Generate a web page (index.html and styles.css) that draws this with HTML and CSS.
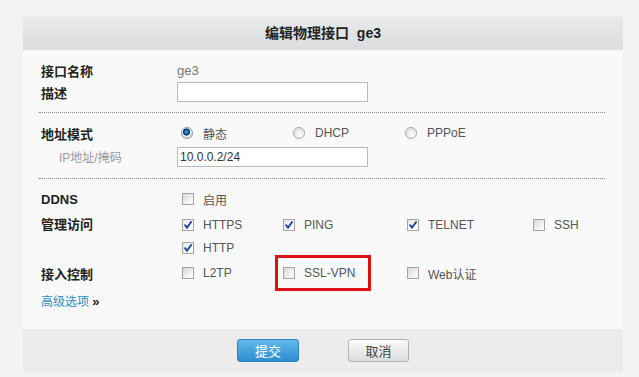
FILE: index.html
```html
<!DOCTYPE html>
<html lang="zh-CN">
<head>
  <meta charset="UTF-8">
  <title>编辑物理接口 ge3</title>
  <link rel="stylesheet" href="styles.css">
</head>
<body>

  <!-- Dialog -->
  <div class="panel">
    <div class="panel-head">编辑物理接口&nbsp; ge3</div>

    <div class="panel-body">
      <!-- Name / description -->
      <div class="group">
        <div class="row">
          <span class="label">接口名称</span>
          <span class="value">ge3</span>
        </div>
        <div class="row">
          <span class="label">描述</span>
          <input class="field" type="text">
        </div>
      </div>

      <!-- Address -->
      <div class="group">
        <div class="row">
          <span class="label">地址模式</span>
          <div class="opts radios">
            <label class="opt"><span class="rd on"></span>静态</label>
            <label class="opt"><span class="rd"></span>DHCP</label>
            <label class="opt"><span class="rd"></span>PPPoE</label>
          </div>
        </div>
        <div class="row row-ip">
          <span class="label sub">IP地址/掩码</span>
          <input class="field" type="text" value="10.0.0.2/24">
        </div>
      </div>

      <!-- Services -->
      <div class="group last">
        <div class="row">
          <span class="label">DDNS</span>
          <div class="opts checks">
            <label class="opt"><span class="cb"></span>启用</label>
          </div>
        </div>
        <div class="row row-multi">
          <span class="label">管理访问</span>
          <div class="opts checks">
            <label class="opt"><span class="cb on"><svg viewBox="0 0 10 10"><path d="M1.6 4.6 L4 7.6 L8.6 1.4"/></svg></span>HTTPS</label>
            <label class="opt"><span class="cb on"><svg viewBox="0 0 10 10"><path d="M1.6 4.6 L4 7.6 L8.6 1.4"/></svg></span>PING</label>
            <label class="opt"><span class="cb on"><svg viewBox="0 0 10 10"><path d="M1.6 4.6 L4 7.6 L8.6 1.4"/></svg></span>TELNET</label>
            <label class="opt"><span class="cb"></span>SSH</label>
            <label class="opt"><span class="cb on"><svg viewBox="0 0 10 10"><path d="M1.6 4.6 L4 7.6 L8.6 1.4"/></svg></span>HTTP</label>
          </div>
        </div>
        <div class="row">
          <span class="label">接入控制</span>
          <div class="opts checks">
            <label class="opt"><span class="cb"></span>L2TP</label>
            <label class="opt marked"><span class="cb"></span>SSL-VPN<span class="mark"></span></label>
            <label class="opt"><span class="cb"></span>Web认证</label>
          </div>
        </div>
      </div>

      <a class="more" href="#">高级选项 <b>&raquo;</b></a>
    </div>

    <div class="panel-foot">
      <button class="btn btn-primary">提交</button>
      <button class="btn">取消</button>
    </div>
  </div>

</body>
</html>
```

FILE: styles.css
```css
/* General */
body {
  margin: 0;
  background-color: #f3f3f3;
  font-family: "Liberation Sans", "Noto Sans CJK SC", sans-serif;
  font-size: 12px;
  color: #555;
}

.panel {
  width: 600px;
  margin: 16px 0 0 23px;
  background-color: #f9f9f9;
}

.panel-head {
  height: 34px;
  line-height: 34px;
  text-align: center;
  font-size: 14px;
  font-weight: bold;
  color: #222;
  background: linear-gradient(#e9eaeb, #dbdddf);
}

.panel-body {
  padding: 0 18px 17px 16px;
}

/* Form groups */
.group {
  padding: 9px 0;
  border-bottom: 1px dotted #8a8a8a;
}

.group.last {
  padding: 8px 0 0;
  border-bottom: none;
  display: flex;
  flex-direction: column;
  gap: 2px;
}

.row {
  display: grid;
  grid-template-columns: 136px 1fr;
  align-items: center;
  height: 22px;
  padding-left: 2px;
}

.row-ip {
  height: 25px;
}

.group.last .row {
  height: 24px;
}

.group.last .row-multi {
  height: 46px;
  align-items: start;
}

.label {
  font-size: 13px;
  font-weight: bold;
  color: #222;
}

.row-multi .label {
  line-height: 23px;
}

.label.sub {
  padding-left: 18px;
  font-size: 12px;
  font-weight: normal;
  color: #999;
}

.value {
  font-size: 13px;
  color: #777;
}

.field {
  width: 191px;
  height: 20px;
  box-sizing: border-box;
  margin: 0;
  padding: 0 2px;
  border: 1px solid #b9b9b9;
  background-color: #fff;
  font-family: "Liberation Sans", sans-serif;
  font-size: 12px;
  color: #333;
  outline: none;
}

/* Options */
.opts {
  display: grid;
  align-items: center;
}

.radios {
  grid-template-columns: 112px 112px auto;
  padding-left: 4px;
}

.checks {
  grid-template-columns: 101px 124px 126px auto;
  grid-auto-rows: 23px;
  padding-left: 5px;
}

.opt {
  display: flex;
  align-items: center;
  gap: 9px;
  color: #555;
}

.radios .opt {
  gap: 10px;
}

.cb {
  width: 12px;
  height: 12px;
  box-sizing: border-box;
  border: 1px solid #a4a4a4;
  background: linear-gradient(135deg, #d6d6d6, #f6f6f6 70%, #fdfdfd);
  display: flex;
  align-items: center;
  justify-content: center;
}

.cb.on {
  background: linear-gradient(135deg, #e4e4e4, #fdfdfd 60%);
}

.cb svg {
  width: 10px;
  height: 10px;
}

.cb path {
  fill: none;
  stroke: #24479a;
  stroke-width: 1.9;
}

.rd {
  width: 12px;
  height: 12px;
  box-sizing: border-box;
  border: 1px solid #a9a9a9;
  border-radius: 50%;
  background: radial-gradient(circle at 60% 65%, #fdfdfd, #dcdcdc);
}

.rd.on {
  border-color: #8a9aa8;
  background: radial-gradient(circle at 45% 40%, #7cc0ee 0, #1d6aa8 1.5px, #103d66 3.2px, #e8eef3 4px, #d4d8dc 6px);
}

/* Annotation box */
.marked {
  position: relative;
}

.mark {
  position: absolute;
  left: -8px;
  top: 50%;
  margin-top: -18px;
  width: 96px;
  height: 36px;
  box-sizing: border-box;
  border: 3px solid #dd1018;
}

.more {
  display: block;
  margin-top: 7px;
  padding-left: 2px;
  line-height: 20px;
  color: #2b8ec4;
  text-decoration: none;
}

.more b {
  color: #222;
  font-size: 13px;
}

/* Footer */
.panel-foot {
  height: 43px;
  box-sizing: border-box;
  padding-top: 10px;
  background-color: #ececec;
  display: flex;
  justify-content: center;
  align-items: flex-start;
  gap: 49px;
}

.btn {
  width: 61px;
  height: 23px;
  padding: 0;
  border: 1px solid #b0b0b0;
  border-radius: 3px;
  background: linear-gradient(#fbfbfb, #dcdcdc);
  font-family: "Liberation Sans", "Noto Sans CJK SC", sans-serif;
  font-size: 13px;
  color: #444;
  cursor: pointer;
}

.btn-primary {
  width: 62px;
  border-color: #2d83c2;
  background: linear-gradient(#62baea, #2f8dd0);
  color: #fff;
}
```
